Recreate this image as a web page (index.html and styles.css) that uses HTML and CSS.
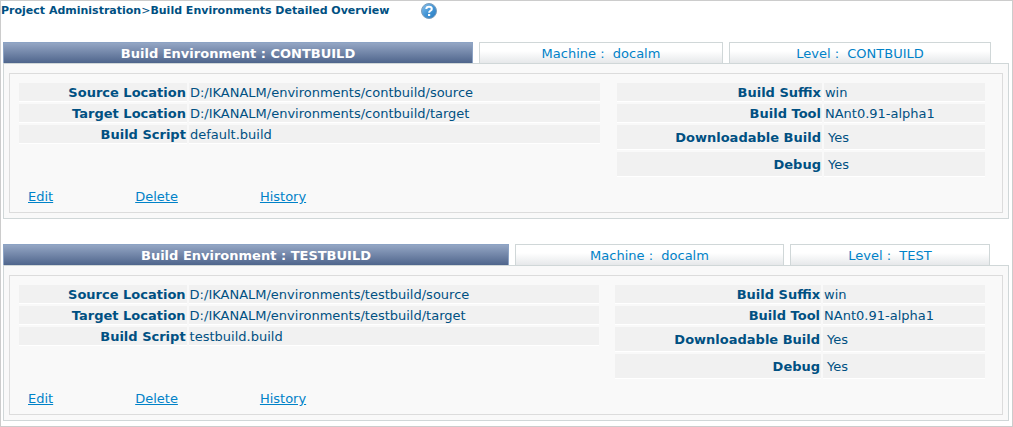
FILE: index.html
```
<!DOCTYPE html>
<html lang="en">
<head>
<meta charset="utf-8">
<title>Build Environments Detailed Overview</title>
<link rel="stylesheet" href="styles.css">
</head>
<body>
<main class="page">
  <header class="page-head">
    <h1 class="title">Project Administration<span class="separator">&gt;</span>Build Environments Detailed Overview</h1>
    <button class="help" type="button" aria-label="Help">
      <svg width="16" height="16" viewBox="0 0 16 16" aria-hidden="true">
        <defs>
          <linearGradient id="ball" x1="0" y1="0" x2="1" y2="1">
            <stop offset="0" stop-color="#8cc4ee"/>
            <stop offset=".5" stop-color="#4596d6"/>
            <stop offset="1" stop-color="#2a7cc0"/>
          </linearGradient>
        </defs>
        <circle cx="8" cy="8" r="7.5" fill="url(#ball)" stroke="#7d9dbb"/>
        <path d="M5.3 6C5.3 2.800 10.800 2.900 10.800 5.900C10.800 7.800 8.100 7.700 8.100 9.700" fill="none" stroke="#fff" stroke-width="2"/>
        <rect x="7" y="11" width="2.200" height="2" fill="#fff"/>
      </svg>
    </button>
  </header>

  <section class="environment environment-cont">
    <div class="tabs">
      <button class="tab tab-active" type="button">Build Environment : CONTBUILD</button>
      <button class="tab" type="button">Machine :&nbsp; docalm</button>
      <button class="tab" type="button">Level :&nbsp; CONTBUILD</button>
    </div>
    <div class="panel">
      <div class="panel-inner">
        <div class="details">
          <table class="facts facts-paths">
            <tr><th scope="row">Source Location</th><td>D:/IKANALM/environments/contbuild/source</td></tr>
            <tr><th scope="row">Target Location</th><td>D:/IKANALM/environments/contbuild/target</td></tr>
            <tr><th scope="row">Build Script</th><td>default.build</td></tr>
          </table>
          <table class="facts facts-options">
            <tr><th scope="row">Build Suffix</th><td>win</td></tr>
            <tr><th scope="row">Build Tool</th><td>NAnt0.91-alpha1</td></tr>
            <tr class="flag"><th scope="row">Downloadable Build</th><td>Yes</td></tr>
            <tr class="flag"><th scope="row">Debug</th><td>Yes</td></tr>
          </table>
        </div>
        <nav class="actions">
          <a href="#edit">Edit</a>
          <a href="#delete">Delete</a>
          <a href="#history">History</a>
        </nav>
      </div>
    </div>
  </section>

  <section class="environment environment-test">
    <div class="tabs">
      <button class="tab tab-active" type="button">Build Environment : TESTBUILD</button>
      <button class="tab" type="button">Machine :&nbsp; docalm</button>
      <button class="tab" type="button">Level :&nbsp; TEST</button>
    </div>
    <div class="panel">
      <div class="panel-inner">
        <div class="details">
          <table class="facts facts-paths">
            <tr><th scope="row">Source Location</th><td>D:/IKANALM/environments/testbuild/source</td></tr>
            <tr><th scope="row">Target Location</th><td>D:/IKANALM/environments/testbuild/target</td></tr>
            <tr><th scope="row">Build Script</th><td>testbuild.build</td></tr>
          </table>
          <table class="facts facts-options">
            <tr><th scope="row">Build Suffix</th><td>win</td></tr>
            <tr><th scope="row">Build Tool</th><td>NAnt0.91-alpha1</td></tr>
            <tr class="flag"><th scope="row">Downloadable Build</th><td>Yes</td></tr>
            <tr class="flag"><th scope="row">Debug</th><td>Yes</td></tr>
          </table>
        </div>
        <nav class="actions">
          <a href="#edit">Edit</a>
          <a href="#delete">Delete</a>
          <a href="#history">History</a>
        </nav>
      </div>
    </div>
  </section>
</main>
</body>
</html>
```
FILE: styles.css
```
* {
  box-sizing: border-box;
}

body {
  margin: 0;
  background: #fff;
  color: #005082;
  font: 13px/16px Verdana, "DejaVu Sans", sans-serif;
}

.page {
  border: 1px solid #ccc;
  padding: 0 3px 5px 2px;
}

.page-head {
  display: flex;
  align-items: center;
  gap: 32px;
  height: 19px;
  margin-left: -2px;
}

.title {
  margin: 0;
  font-size: 11px;
  line-height: 18px;
  white-space: nowrap;
}

.separator {
  font-weight: normal;
}

.help {
  display: flex;
  padding: 0;
  border: 0;
  background: none;
  cursor: pointer;
}

.environment {
  margin-top: 25px;
}

.environment-cont {
  margin-top: 22px;
}

.tabs {
  display: grid;
  gap: 6px;
  padding-right: 18px;
}

.environment-cont .tabs {
  grid-template-columns: 470fr 244fr 262fr;
}

.environment-test .tabs {
  grid-template-columns: 506fr 269fr 200fr;
  padding-right: 19px;
}

.tab {
  height: 21px;
  padding: 2px 0 0;
  border: 1px solid #d0d7d8;
  border-bottom: 0;
  background: linear-gradient(#fff 40%, #e6e8ea);
  color: #0082c8;
  font: inherit;
  white-space: nowrap;
  cursor: pointer;
}

.tab-active {
  border-color: #8ca3c4;
  background: linear-gradient(#94a6c4, #4f658c);
  color: #fff;
  font-weight: bold;
}

.panel {
  padding: 9px 5px 5px;
  border: 1px solid #d0d7d8;
  background: #f9f9f9;
}

.panel-inner {
  padding: 7px 15px 7px 7px;
  border: 1px solid #dcdcdc;
}

.details {
  display: grid;
  grid-template-columns: 585fr 372fr;
  gap: 13px;
  align-items: start;
}

.environment-test .details {
  grid-template-columns: 584fr 374fr;
  gap: 12px;
}

.facts {
  width: 100%;
  border-spacing: 2px;
  table-layout: fixed;
}

.facts th,
.facts td {
  height: 19px;
  padding: 2px 1px 0;
  border-bottom: 1px solid #fff;
  background: #f1f1f1;
}

.facts th {
  text-align: right;
}

.facts-paths th {
  width: 29%;
}

.facts-options th {
  width: 56%;
}

.facts .flag th,
.facts .flag td {
  height: 25px;
}

.facts .flag td {
  padding-left: 4px;
}

.actions {
  display: flex;
  gap: 82px;
  margin-top: 10px;
  padding-left: 11px;
}

.actions a {
  color: #0082c8;
}
```
